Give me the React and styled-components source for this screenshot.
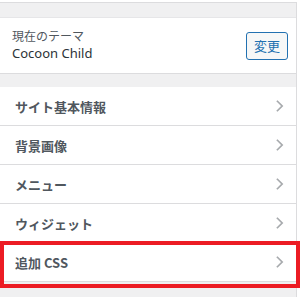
import styled, { createGlobalStyle } from "styled-components";

const GlobalStyle = createGlobalStyle`
  body {
    margin: 0;
    background: #ffffff;
    font-family: "Noto Sans", "Noto Sans CJK JP", sans-serif;
  }
`;

const sections = [
  { label: "サイト基本情報" },
  { label: "背景画像" },
  { label: "メニュー" },
  { label: "ウィジェット" },
  { label: "追加 CSS", marked: true },
];

const App = () => {
  return (
    <>
      <GlobalStyle />
      <Sidebar>
        <TopGap />
        <ThemePanel>
          <ThemeInfo>
            <ThemeCaption>現在のテーマ</ThemeCaption>
            <ThemeName>Cocoon Child</ThemeName>
          </ThemeInfo>
          <ChangeButton>変更</ChangeButton>
        </ThemePanel>
        <SectionList>
          {sections.map((s) => (
            <SectionRow key={s.label} $marked={s.marked}>
              <span>{s.label}</span>
              <Chevron viewBox="0 0 10 16">
                <path d="M2 2 L8 8 L2 14" />
              </Chevron>
            </SectionRow>
          ))}
        </SectionList>
      </Sidebar>
    </>
  );
};

const Sidebar = styled.div`
  width: 297px;
  height: 297px;
  margin-top: 2px;
  background: #f0f0f1;
  border-top: 1px solid #dcdcde;
  border-right: 1px solid #dcdcde;
  box-sizing: border-box;
  position: relative;
`;

const TopGap = styled.div`
  height: 14px;
`;

const ThemePanel = styled.div`
  height: 55px;
  background: #ffffff;
  border-top: 1px solid #e6e6e8;
  border-bottom: 1px solid #dcdcde;
  display: flex;
  align-items: center;
  justify-content: space-between;
  padding: 0 8px 0 12px;
`;

const ThemeInfo = styled.div`
  display: flex;
  flex-direction: column;
  gap: 1px;
`;

const ThemeCaption = styled.span`
  font-size: 12px;
  color: #50575e;
  line-height: 15px;
`;

const ThemeName = styled.span`
  font-size: 13px;
  color: #2c3338;
  line-height: 17px;
  font-weight: 400;
`;

const ChangeButton = styled.button`
  width: 42px;
  height: 28px;
  border: 1px solid #2271b1;
  border-radius: 3px;
  background: #f6f7f7;
  color: #2271b1;
  font-family: "Noto Sans CJK JP", sans-serif;
  font-size: 13px;
  padding: 0;
`;

const SectionList = styled.div`
  margin-top: 13px;
  display: flex;
  flex-direction: column;
`;

const SectionRow = styled.div`
  height: 38px;
  background: #ffffff;
  border-bottom: 1px solid #dcdcde;
  display: flex;
  align-items: center;
  justify-content: space-between;
  padding: 0 12px 0 15px;
  font-family: "Noto Sans CJK JP", sans-serif;
  font-size: 13px;
  font-weight: 700;
  color: #50575e;
  position: relative;

  &::after {
    content: "";
    display: ${(p) => (p.$marked ? "block" : "none")};
    position: absolute;
    left: 0;
    top: -2px;
    width: 300px;
    height: 47px;
    border: 4px solid #ec1c24;
    box-sizing: border-box;
  }
`;

const Chevron = styled.svg`
  width: 9px;
  height: 14px;
  fill: none;
  stroke: #a7aaad;
  stroke-width: 2;
`;

export default App;
